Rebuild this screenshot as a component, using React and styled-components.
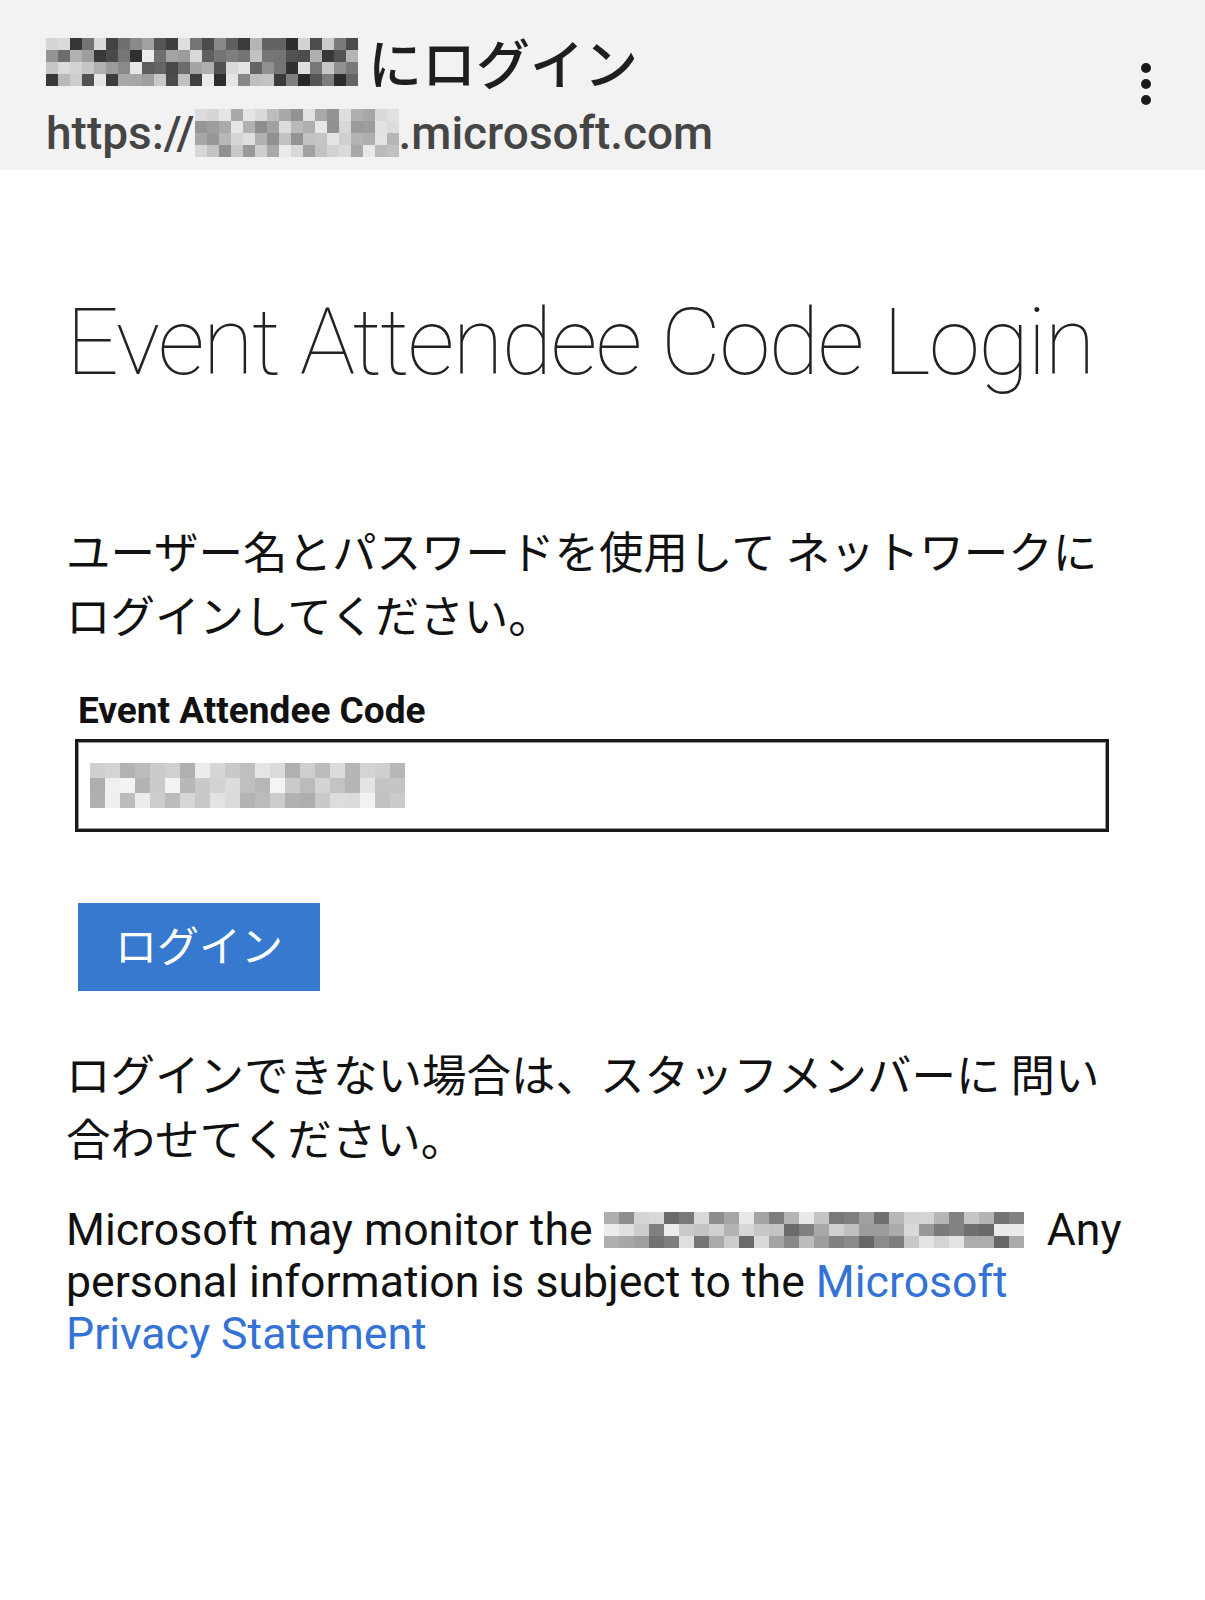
import React from "react";
import styled, { createGlobalStyle } from "styled-components";

const GlobalStyle = createGlobalStyle`
  html, body { margin: 0; padding: 0; background: #ffffff; }
  body { font-family: Roboto, "Noto Sans CJK JP", sans-serif; color: #111; }
  * { box-sizing: border-box; }
`;

const JP = `"Noto Sans CJK JP", "Noto Sans", sans-serif`;

const Page = styled.div`
  width: 1205px;
  min-height: 1600px;
  background: #fff;
`;

const Header = styled.header`
  height: 170px;
  background: #f2f2f2;
  display: flex;
  align-items: flex-start;
  justify-content: space-between;
  padding: 34px 54px 0 46px;
`;

const HeaderText = styled.div`
  display: flex;
  flex-direction: column;
  gap: 18px;
`;

const TitleRow = styled.div`
  display: flex;
  align-items: center;
  gap: 10px;
  height: 56px;
`;

const HeaderTitle = styled.span`
  font-family: ${JP};
  font-size: 54px;
  font-weight: 500;
  color: #1e1e1e;
  line-height: 56px;
`;

const UrlRow = styled.div`
  display: flex;
  align-items: center;
  height: 50px;
  font-family: Roboto, sans-serif;
  font-weight: 500;
  font-size: 46px;
  color: #454545;
`;

const Kebab = styled.div`
  display: flex;
  flex-direction: column;
  gap: 6px;
  margin-top: 29px;
`;

const Dot = styled.span`
  width: 10px;
  height: 10px;
  border-radius: 50%;
  background: #1b1b1b;
`;

const Main = styled.main`
  padding: 0 0 0 66px;
`;

const PageTitle = styled.h1`
  margin: 126px 0 0 0;
  font-family: Roboto, sans-serif;
  font-weight: 100;
  font-size: 93px;
  line-height: 94px;
  color: #222;
  letter-spacing: -1.9px;
`;

const JpPara = styled.p`
  margin: ${(p) => p.$top}px 0 0 0;
  font-family: ${JP};
  font-size: 44.5px;
  line-height: 64px;
  color: #111;
  width: 1060px;
`;

const FormGroup = styled.div`
  margin: 44px 0 0 9px;
  display: flex;
  flex-direction: column;
`;

const Label = styled.label`
  font-family: Roboto, sans-serif;
  font-weight: 700;
  font-size: 37px;
  line-height: 42px;
  color: #111;
  margin-left: 3px;
`;

const InputBox = styled.div`
  margin-top: 7px;
  width: 1034px;
  height: 93px;
  border: 3px solid #1a1a1a;
  box-shadow: inset 0 0 0 1px #9a9a9a;
  background: #fff;
  display: flex;
  align-items: center;
  padding-left: 12px;
`;

const LoginButton = styled.button`
  margin: 71px 0 0 3px;
  width: 242px;
  height: 88px;
  border: none;
  background: #3779cf;
  color: #fff;
  font-family: ${JP};
  font-size: 42px;
  line-height: 1;
  display: flex;
  align-items: center;
  justify-content: center;
  padding: 0 0 6px 0;
`;

const EnPara = styled.p`
  margin: 35px 0 0 0;
  font-family: Roboto, sans-serif;
  font-size: 44.6px;
  line-height: 52px;
  color: #111;
  width: 1080px;
`;

const Link = styled.a`
  color: #3472d6;
  text-decoration: none;
`;

const MosaicWrap = styled.span`
  display: inline-block;
  vertical-align: ${(p) => p.$valign || "middle"};
  line-height: 0;
  margin-right: ${(p) => p.$mr || 0}px;
`;

function Mosaic({ cols, rows, cell, cellH, seed, min, max, valign, mr }) {
  let s = seed;
  const rnd = () => {
    s = (s * 9301 + 49297) % 233280;
    return s / 233280;
  };
  const h = cellH || cell;
  const rects = [];
  for (let r = 0; r < rows; r++) {
    for (let c = 0; c < cols; c++) {
      const v = Math.round(min + rnd() * (max - min));
      rects.push(
        <rect key={r + "-" + c} x={c * cell} y={r * h} width={cell} height={h} fill={`rgb(${v},${v},${v})`} />
      );
    }
  }
  return (
    <MosaicWrap $valign={valign} $mr={mr}>
      <svg width={cols * cell} height={rows * h} viewBox={`0 0 ${cols * cell} ${rows * h}`}>
        {rects}
      </svg>
    </MosaicWrap>
  );
}

export default function App() {
  return (
    <Page>
      <GlobalStyle />
      <Header>
        <HeaderText>
          <TitleRow>
            <Mosaic cols={26} rows={4} cell={12} seed={17} min={40} max={235} />
            <HeaderTitle>にログイン</HeaderTitle>
          </TitleRow>
          <UrlRow>
            https://
            <Mosaic cols={17} rows={4} cell={12} seed={91} min={140} max={235} />
            .microsoft.com
          </UrlRow>
        </HeaderText>
        <Kebab>
          <Dot />
          <Dot />
          <Dot />
        </Kebab>
      </Header>
      <Main>
        <PageTitle>Event Attendee Code Login</PageTitle>
        <JpPara $top={128}>
          ユーザー名とパスワードを使用して ネットワークにログインしてください。
        </JpPara>
        <FormGroup>
          <Label>Event Attendee Code</Label>
          <InputBox>
            <Mosaic cols={21} rows={3} cell={15} seed={7} min={170} max={245} />
          </InputBox>
          <LoginButton>ログイン</LoginButton>
        </FormGroup>
        <JpPara $top={50}>
          ログインできない場合は、スタッフメンバーに 問い合わせてください。
        </JpPara>
        <EnPara>
          Microsoft may monitor the{" "}
          <Mosaic cols={28} rows={3} cell={15} cellH={12} seed={33} min={100} max={240} valign="-3px" mr={12} />{" "}
          Any personal information is subject to the{" "}
          <Link href="#">Microsoft Privacy Statement</Link>
        </EnPara>
      </Main>
    </Page>
  );
}
